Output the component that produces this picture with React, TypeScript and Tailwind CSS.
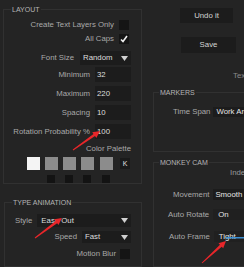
import React from "react";

const font = { fontFamily: '"Liberation Sans", Arial, sans-serif' };

function Caret() {
  return (
    <svg width="7" height="5" viewBox="0 0 7 5" className="shrink-0">
      <path d="M0 0 L7 0 L3.5 5 Z" fill="#d0d0d0" />
    </svg>
  );
}

function Check({ checked }: { checked?: boolean }) {
  return (
    <div className="flex h-[10px] w-[10px] shrink-0 items-center justify-center bg-[#151515]">
      {checked && (
        <svg width="8" height="8" viewBox="0 0 8 8">
          <path d="M1 4.5 L3 6.5 L7 1" stroke="#f0f0f0" strokeWidth="1.6" fill="none" />
        </svg>
      )}
    </div>
  );
}

function Arrow({ x1, y1, x2, y2 }: { x1: number; y1: number; x2: number; y2: number }) {
  const dx = x2 - x1;
  const dy = y2 - y1;
  const len = Math.hypot(dx, dy);
  const ux = dx / len;
  const uy = dy / len;
  const nx = -uy;
  const ny = ux;
  const hb = 7;
  const bx = x2 - ux * hb;
  const by = y2 - uy * hb;
  const pts = [
    [x1 + nx * 0.5, y1 + ny * 0.5],
    [bx + nx * 1.3, by + ny * 1.3],
    [bx + nx * 3.5, by + ny * 3.5],
    [x2, y2],
    [bx - nx * 3.5, by - ny * 3.5],
    [bx - nx * 1.3, by - ny * 1.3],
    [x1 - nx * 0.5, y1 - ny * 0.5],
  ]
    .map((p) => p.join(","))
    .join(" ");
  return <polygon points={pts} fill="#e8262a" />;
}

export default function App() {
  return (
    <div
      className="relative flex h-[267px] w-[244px] overflow-hidden whitespace-nowrap bg-[#242424] text-[7.8px] leading-none text-[#a9a9a9]"
      style={font}
    >
      {/* left column */}
      <div className="flex w-[142px] shrink-0 flex-col pl-[3px]">
        <fieldset className="mt-[6px] h-[184px] border border-[#313131] pr-[10px]">
          <legend className="ml-[7px] px-[1px] text-[7px] text-[#b4b4b4]">LAYOUT</legend>
          <div className="mt-[5px] flex h-[14px] items-center justify-end gap-[5px] pr-[2px]">
            <span>Create Text Layers Only</span>
            <Check />
          </div>
          <div className="flex h-[14px] items-center justify-end gap-[5px] pr-[2px]">
            <span>All Caps</span>
            <Check checked />
          </div>
          <div className="mt-[5px] flex h-[14px] items-center justify-end gap-[6px]">
            <span>Font Size</span>
            <div className="flex h-[14px] w-[51px] items-center justify-between bg-[#1c1c1c] pl-[3px] pr-[3px] text-[#dcdcdc]">
              <span>Random</span>
              <Caret />
            </div>
          </div>
          {[
            ["Minimum", "32", "mt-[2px]"],
            ["Maximum", "220", "mt-[4px]"],
            ["Spacing", "10", "mt-[4px]"],
            ["Rotation Probability %", "100", "mt-[4px]"],
          ].map(([label, val, mt]) => (
            <div key={label} className={`${mt} flex h-[15px] items-center justify-end gap-[5px]`}>
              <span>{label}</span>
              <div className="flex h-[15px] w-[36px] items-center bg-[#1c1c1c] pl-[2px] text-[#dcdcdc]">
                {val}
              </div>
            </div>
          ))}
          <div className="mt-[5px] flex h-[10px] items-center justify-end">Color Palette</div>
          <div className="mt-[3px] flex h-[13px] items-center pl-[23px]">
            <div className="h-[13px] w-[13px] bg-[#f4f4f4]" />
            <div className="ml-[5px] h-[13px] w-[13px] bg-[#8c8c8c]" />
            <div className="ml-[5px] h-[13px] w-[13px] bg-[#8c8c8c]" />
            <div className="ml-[5px] h-[13px] w-[13px] bg-[#8c8c8c]" />
            <div className="ml-[6px] h-[13px] w-[13px] bg-[#8c8c8c]" />
            <div className="ml-[7px] flex h-[11px] w-[10px] items-center justify-center bg-[#1a1a1a] text-[7px] text-[#e0e0e0]">
              K
            </div>
          </div>
          <div className="mt-[5px] flex h-[8px] pl-[43px]">
            <div className="h-[8px] w-[8px] bg-[#131313]" />
            <div className="ml-[10px] h-[8px] w-[8px] bg-[#131313]" />
            <div className="ml-[10px] h-[8px] w-[8px] bg-[#131313]" />
            <div className="ml-[11px] h-[8px] w-[8px] bg-[#131313]" />
          </div>
        </fieldset>
        <fieldset className="ml-[1px] mt-[15px] h-[80px] border border-[#313131] pr-[10px]">
          <legend className="ml-[7px] px-[1px] text-[7px] text-[#b4b4b4]">TYPE ANIMATION</legend>
          <div className="mt-[8px] flex h-[13px] items-center gap-[5px] pl-[10px]">
            <span>Style</span>
            <div className="flex h-[13px] flex-1 items-center justify-between bg-[#1c1c1c] pl-[4px] pr-[3px] text-[#dcdcdc]">
              <span>Ease Out</span>
              <Caret />
            </div>
          </div>
          <div className="mt-[4px] flex h-[12px] items-center justify-end gap-[5px]">
            <span>Speed</span>
            <div className="flex h-[12px] w-[49px] items-center justify-between bg-[#1c1c1c] pl-[3px] pr-[3px] text-[#dcdcdc]">
              <span>Fast</span>
              <Caret />
            </div>
          </div>
          <div className="mt-[6px] flex h-[10px] items-center justify-end gap-[4px] pr-[1px]">
            <span>Motion Blur</span>
            <Check />
          </div>
        </fieldset>
      </div>

      {/* right column */}
      <div className="flex flex-1 flex-col">
        <div className="mt-[8px] ml-[38px] flex h-[17px] w-[53px] items-center justify-center bg-[#1c1c1c] text-[#d4d4d4]">
          Undo it
        </div>
        <div className="mt-[14px] ml-[39px] flex h-[18px] w-[55px] items-center justify-center bg-[#1c1c1c] text-[#d4d4d4]">
          Save
        </div>
        <div className="mt-[19px] ml-[91px] text-[#8a8a8a]">Text</div>
        <fieldset className="ml-[11px] mt-[9px] h-[70px] w-[110px] border border-[#313131]">
          <legend className="ml-[5px] px-[1px] text-[7px] text-[#b4b4b4]">MARKERS</legend>
          <div className="mt-[11px] flex h-[10px] items-center gap-[3px] pl-[19px]">
            <span>Time Span</span>
            <div className="flex h-[10px] flex-1 items-center bg-[#1c1c1c] pl-[3px] text-[#e4e4e4]">
              Work Area
            </div>
          </div>
          <div className="mt-[8px] pl-[92px] text-[#9a9a9a]">Mode</div>
        </fieldset>
        <fieldset className="ml-[11px] mt-[7px] h-[120px] w-[110px] border border-[#313131]">
          <legend className="ml-[5px] px-[1px] text-[7px] text-[#b4b4b4]">MONKEY CAM</legend>
          <div className="mt-[3px] pl-[76px] text-[#9a9a9a]">Index</div>
          <div className="mt-[12px] flex h-[11px] items-center gap-[4px] pl-[19px]">
            <span>Movement</span>
            <div className="flex h-[11px] flex-1 items-center bg-[#1c1c1c] pl-[2px] text-[#e4e4e4]">
              Smooth
            </div>
          </div>
          <div className="mt-[9px] flex h-[11px] items-center gap-[4px] pl-[14px]">
            <span>Auto Rotate</span>
            <div className="flex h-[11px] flex-1 items-center bg-[#202020] pl-[5px] text-[#e4e4e4]">On</div>
          </div>
          <div className="mt-[11px] flex h-[11px] items-center gap-[4px] pl-[15px]">
            <span>Auto Frame</span>
            <div className="flex h-[11px] flex-1 items-center bg-[#202020] pl-[5px] text-[#e4e4e4]">Tight</div>
          </div>
        </fieldset>
      </div>

      <svg className="pointer-events-none absolute inset-0" width="244" height="267">
        <rect x="226" y="237" width="18" height="1.5" fill="#3b8fd2" />
        <Arrow x1={73} y1={150} x2={100} y2={131} />
        <Arrow x1={35} y1={238} x2={62} y2={218} />
        <Arrow x1={202} y1={263} x2={226} y2={241} />
      </svg>
    </div>
  );
}
